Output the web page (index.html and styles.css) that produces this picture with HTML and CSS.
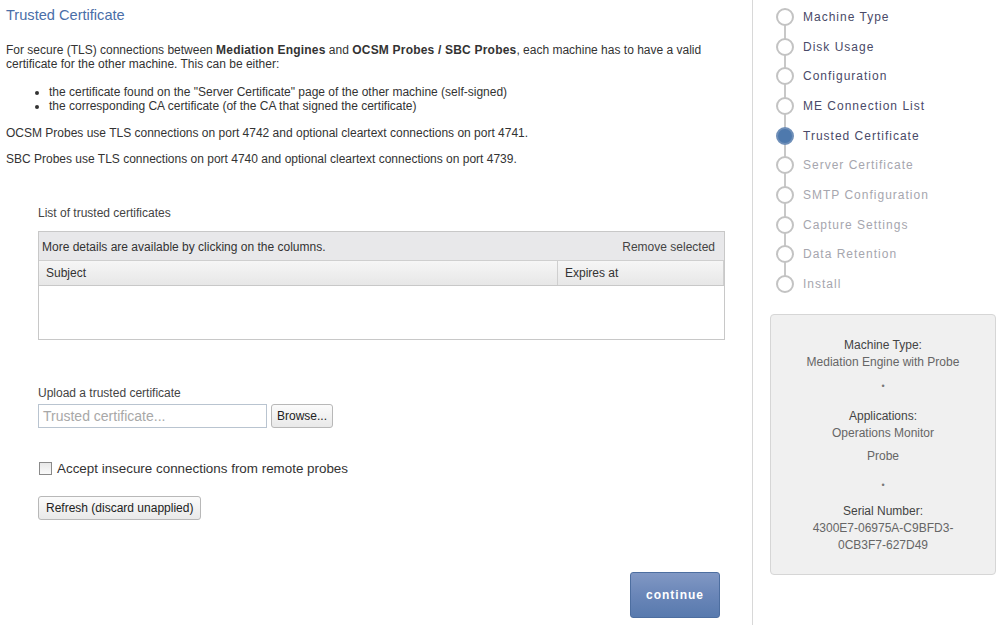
FILE: index.html
```html
<!DOCTYPE html>
<html>
<head>
<meta charset="utf-8">
<link rel="stylesheet" href="styles.css">
</head>
<body>
<div class="page">
  <main class="main">
    <h1 class="title">Trusted Certificate</h1>
    <p class="intro"><span>For secure (TLS) connections between </span><b class="em">Mediation Engines</b><span> and </span><b class="em">OCSM Probes / SBC Probes</b><span>, each machine has to have a valid</span><br><span>certificate for the other machine. This can be either:</span></p>
    <ul class="bullets">
      <li>the certificate found on the "Server Certificate" page of the other machine (self-signed)</li>
      <li>the corresponding CA certificate (of the CA that signed the certificate)</li>
    </ul>
    <p class="para">OCSM Probes use TLS connections on port 4742 and optional cleartext connections on port 4741.</p>
    <p class="para">SBC Probes use TLS connections on port 4740 and optional cleartext connections on port 4739.</p>

    <section class="block list-block">
      <div class="label">List of trusted certificates</div>
      <div class="grid">
        <div class="grid-toolbar">
          <span>More details are available by clicking on the columns.</span>
          <span class="remove">Remove selected</span>
        </div>
        <div class="grid-head">
          <div class="col-subject">Subject</div>
          <div class="col-expires">Expires at</div>
        </div>
        <div class="grid-body"></div>
      </div>
    </section>

    <section class="block upload-block">
      <div class="label">Upload a trusted certificate</div>
      <div class="upload-row">
        <div class="file-input">Trusted certificate...</div>
        <button class="btn browse">Browse...</button>
      </div>
    </section>

    <label class="check-row">
      <span class="checkbox"></span>
      <span>Accept insecure connections from remote probes</span>
    </label>

    <div class="block refresh-block">
      <button class="btn">Refresh (discard unapplied)</button>
    </div>

    <div class="actions">
      <button class="continue">continue</button>
    </div>
  </main>

  <aside class="side">
    <ol class="steps">
      <li class="step done"><span class="dot"></span>Machine Type</li>
      <li class="step done"><span class="dot"></span>Disk Usage</li>
      <li class="step done"><span class="dot"></span>Configuration</li>
      <li class="step done"><span class="dot"></span>ME Connection List</li>
      <li class="step done current"><span class="dot"></span>Trusted Certificate</li>
      <li class="step"><span class="dot"></span>Server Certificate</li>
      <li class="step"><span class="dot"></span>SMTP Configuration</li>
      <li class="step"><span class="dot"></span>Capture Settings</li>
      <li class="step"><span class="dot"></span>Data Retention</li>
      <li class="step last"><span class="dot"></span>Install</li>
    </ol>

    <div class="summary">
      <div class="sum-title">Machine Type:</div>
      <div class="sum-val">Mediation Engine with Probe</div>
      <div class="sep sep-a">•</div>
      <div class="sum-title">Applications:</div>
      <div class="sum-val">Operations Monitor</div>
      <div class="sum-val gap">Probe</div>
      <div class="sep sep-b">•</div>
      <div class="sum-title">Serial Number:</div>
      <div class="sum-val">4300E7-06975A-C9BFD3-<br>0CB3F7-627D49</div>
    </div>
  </aside>
</div>
</body>
</html>
```
FILE: styles.css
```css
* { box-sizing: border-box; }
html, body { margin: 0; padding: 0; background: #fff; }
body {
  font-family: "Liberation Sans", Arial, sans-serif;
  font-size: 12px;
  color: #333;
  width: 999px;
  height: 625px;
  overflow: hidden;
}
.page { display: flex; height: 625px; }
.main { width: 752px; padding: 7px 0 0 6px; display: flex; flex-direction: column; }
.title { margin: 0; font-size: 14.6px; font-weight: normal; color: #4a6ea8; line-height: 17px; }
.intro { margin: 19px 0 0; line-height: 14px; width: 740px; }
.em { font-weight: bold; letter-spacing: 0.2px; }
.bullets { margin: 14px 0 0; padding-left: 43px; line-height: 14px; }
.bullets li { list-style: disc; }
.para { margin: 13px 0 0; line-height: 14px; }
.para + .para { margin-top: 12px; }

.block { padding-left: 32px; }
.label { color: #444; line-height: 14px; }
.list-block { margin-top: 40px; }
.list-block .label { margin-bottom: 11px; }
.grid { width: 687px; border: 1px solid #c8c8c8; }
.grid-toolbar {
  height: 29px; background: #e8e8ea; display: flex; justify-content: space-between; align-items: center;
  padding: 2px 9px 0 3px; border-bottom: 1px solid #cfcfcf; color: #333;
}
.remove { color: #444; }
.grid-head { display: flex; height: 25px; background: linear-gradient(#f6f6f6, #e7e7e7); border-bottom: 1px solid #c8c8c8; }
.grid-head > div { display: flex; align-items: center; padding-left: 7px; }
.col-subject { width: 519px; border-right: 1px solid #cfcfcf; }
.col-expires { flex: 1; border-right: 1px solid #cfcfcf; }
.grid-body { height: 53px; background: #fff; }

.upload-block { margin-top: 46px; }
.upload-block .label { margin-bottom: 4px; }
.upload-row { display: flex; gap: 4px; }
.file-input {
  width: 229px; height: 24px; border: 1px solid #b9c4d0; padding: 3px 4px;
  font-size: 14px; color: #a8a8a8; line-height: 16px;
}
.btn {
  font-family: "Liberation Sans", Arial, sans-serif; font-size: 12px; color: #222;
  height: 24px; padding: 0 7px; border: 1px solid #b8b8b8; border-radius: 3px;
  background: linear-gradient(#fbfbfb, #e9e9e9);
}
.btn.browse { padding: 0 5px; }
.check-row { display: flex; align-items: center; gap: 5px; margin: 33px 0 0 33px; font-size: 13.4px; color: #333; }
.checkbox { width: 13px; height: 13px; border: 1px solid #8a8a8a; background: linear-gradient(#e8e8e8, #fafafa); }
.refresh-block { margin-top: 20px; }
.actions { margin-top: 52px; display: flex; justify-content: flex-end; padding-right: 32px; }
.continue {
  width: 90px; height: 46px; border: 1px solid #4d6ea0; border-radius: 3px; color: #fff;
  font-family: "Liberation Sans", Arial, sans-serif; font-size: 12px; font-weight: bold; letter-spacing: 1px;
  background: linear-gradient(#8198c4, #6a86b8 50%, #587aae);
}

.side { width: 247px; border-left: 1px solid #d8d8d8; padding: 2px 4px 0 17px; display: flex; flex-direction: column; }
.steps { margin: 0; padding: 0; list-style: none; }
.step {
  position: relative; height: 29.7px; display: flex; align-items: center; gap: 9px;
  letter-spacing: 1px; font-size: 12px; color: #a6a6ae; padding-left: 6px;
}
.step.done { color: #4a4a68; }
.dot { width: 18px; height: 18px; border: 2px solid #c3c3c3; border-radius: 50%; background: #fff; position: relative; z-index: 1; flex: none; }
.step.current .dot { background: #4e79ad; border-color: #6f8fb8; }
.step::after {
  content: ""; position: absolute; left: 14px; top: 50%; height: 100%; width: 2px; background: #c8c8c8;
}
.step.last::after { display: none; }
.summary {
  margin-top: 15px; width: 226px; height: 261px; background: #f0f0f0; border: 1px solid #d6d6d6; border-radius: 4px;
  text-align: center; padding-top: 22px; color: #555; line-height: 17px;
}
.sum-title { color: #444; }
.sum-val { color: #666; }
.sum-val.gap { margin-top: 6px; }
.sep { font-size: 9px; color: #777; }
.sep-a { height: 37px; line-height: 30px; }
.sep-b { height: 38px; line-height: 40px; }
```
